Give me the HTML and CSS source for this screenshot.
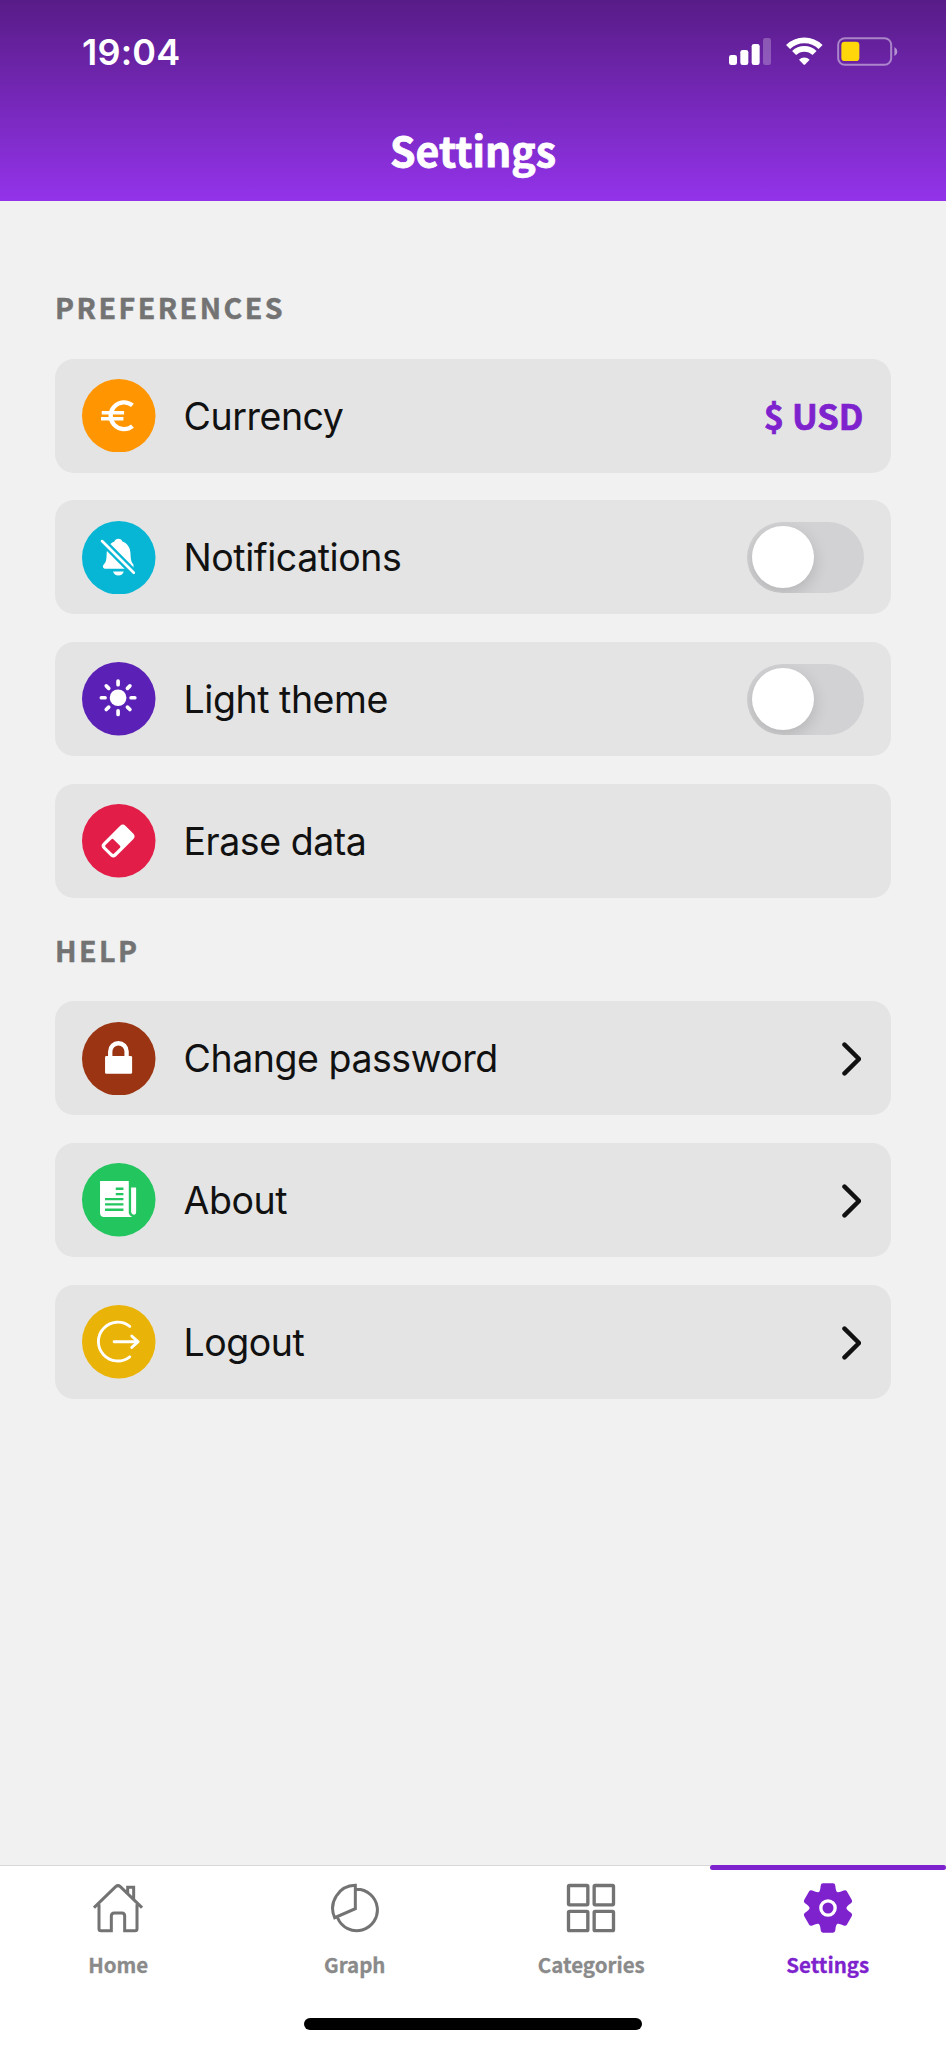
FILE: index.html
```html
<!DOCTYPE html>
<html lang="en">
<head>
<meta charset="utf-8">
<title>Settings</title>
<link rel="stylesheet" href="styles.css">
</head>
<body>
<div class="screen">
  <header class="header">
    <div class="status">
      <span class="time">19:04</span>
      <div class="status-icons">
        <svg class="signal" viewBox="768 111 126 87"><g fill="#fff"><rect x="768" y="165" width="24" height="30" rx="7"/><rect x="802" y="150" width="24" height="45" rx="7"/><rect x="836" y="132" width="24" height="63" rx="7"/><rect x="870" y="114" width="24" height="81" rx="7" opacity=".25"/></g></svg>
        <svg class="wifi" viewBox="938 111 111 87"><g fill="none" stroke="#fff"><path stroke-width="17" d="M944.2 141.2A69 69 0 0 1 1041.8 141.2"/><path stroke-width="17" d="M962.3 159.3A43.5 43.5 0 0 1 1023.700 159.3"/></g><path fill="#fff" d="M977 179A23 23 0 0 1 1009 179L996 193Q993 196 990 193Z"/></svg>
        <svg class="battery" viewBox="1092 111 182 87"><rect x="1095.500" y="114.500" width="159" height="80" rx="20" fill="none" stroke="#fff" stroke-opacity=".45" stroke-width="6"/><rect x="1105" y="125" width="54" height="58" rx="10" fill="#ffd60a"/><path d="M1264 141Q1273 146 1273 155T1264 169Z" fill="#fff" fill-opacity=".5"/></svg>
      </div>
    </div>
    <h1 class="title">Settings</h1>
  </header>

  <main class="content">
    <section class="group">
      <h2 class="group-title">PREFERENCES</h2>
      <div class="row">
        <svg class="badge" viewBox="0 0 220 220"><circle cx="110" cy="110" r="110" fill="#ff9500"/><g fill="none" stroke="#fff" stroke-width="13"><path d="M151 79A40 40 0 1 0 151 141"/><path d="M59 101H126M57 119H124" stroke-width="10"/></g></svg>
        <span class="label">Currency</span>
        <span class="value">$ USD</span>
      </div>
      <div class="row">
        <svg class="badge" viewBox="0 0 220 220"><circle cx="110" cy="110" r="110" fill="#06b6d4"/><path fill="#fff" d="M109 53C115 53 119 56 121 61C136 67 144 79 145 95C146 116 147 122 154 130V143H68C62 141 61 135 65 130C73 122 73 116 74 95C75 79 83 67 97 61C99 56 103 53 109 53ZM93 151H125C123 159 117 163 109 163S95 159 93 151Z"/><path d="M52 51L164 164" stroke="#06b6d4" stroke-width="22"/><path d="M60 60L155 155" stroke="#fff" stroke-width="8" stroke-linecap="round"/></svg>
        <span class="label">Notifications</span>
        <span class="switch"><span class="knob"></span></span>
      </div>
      <div class="row">
        <svg class="badge" viewBox="0 0 220 220"><circle cx="110" cy="110" r="110" fill="#5b21b6"/><g transform="translate(108 107)"><circle r="25" fill="#fff"/><path d="M0-50V-39M0 39V50M-50 0H-39M39 0H50M-35.400-35.400L-28-28M28 28L35.400 35.400M-35.400 35.400L-28 28M28-28L35.400-35.400" stroke="#fff" stroke-width="11" stroke-linecap="round"/></g></svg>
        <span class="label">Light theme</span>
        <span class="switch"><span class="knob"></span></span>
      </div>
      <div class="row">
        <svg class="badge" viewBox="0 0 220 220"><circle cx="110" cy="110" r="110" fill="#e11d48"/><g transform="translate(108 111) rotate(-45)"><rect x="-48" y="-28" width="96" height="56" rx="12" fill="#fff"/><rect x="-39" y="-18" width="33" height="36" rx="4" fill="#e11d48"/></g></svg>
        <span class="label">Erase data</span>
      </div>
    </section>

    <section class="group">
      <h2 class="group-title">HELP</h2>
      <div class="row">
        <svg class="badge" viewBox="0 0 220 220"><circle cx="110" cy="110" r="110" fill="#9a3412"/><rect x="69" y="102" width="81" height="53" rx="4" fill="#fff"/><path d="M84.500 104V88A24.500 24.500 0 0 1 133.500 88V104" fill="none" stroke="#fff" stroke-width="13"/></svg>
        <span class="label">Change password</span>
        <svg class="chevron" viewBox="0 0 19 34"><path d="M2.500 2.700L17 17L2.500 31.300"/></svg>
      </div>
      <div class="row">
        <svg class="badge" viewBox="0 0 220 220"><circle cx="110" cy="110" r="110" fill="#22c55e"/><path fill="#fff" d="M54 54H140V150Q141 158 150 162H66Q54 162 54 150ZM147 73H162V147Q162 155 155 155T147 147Z"/><path d="M101 77H124M101 93H124M69 108H124M69 124H124M69 140H124" stroke="#22c55e" stroke-width="7"/></svg>
        <span class="label">About</span>
        <svg class="chevron" viewBox="0 0 19 34"><path d="M2.500 2.700L17 17L2.500 31.300"/></svg>
      </div>
      <div class="row">
        <svg class="badge" viewBox="0 0 220 220"><circle cx="110" cy="110" r="110" fill="#eab308"/><g fill="none" stroke="#fff" stroke-width="8.500" stroke-linecap="round" stroke-linejoin="round"><path d="M143 64A58 58 0 1 0 143 155"/><path d="M96 110H168M149 93L168 110L149 127"/></g></svg>
        <span class="label">Logout</span>
        <svg class="chevron" viewBox="0 0 19 34"><path d="M2.500 2.700L17 17L2.500 31.300"/></svg>
      </div>
    </section>
  </main>

  <nav class="tabs">
    <div class="tab-list">
      <a class="tab">
        <svg class="tab-icon" viewBox="279 98 150 150"><path d="M282 172L347 109Q354 103 361 109L426 172M383 129V111H401V147M297 162V235Q297 241 303 241H334V197Q334 188 343 188H366Q374 188 374 197V241H405Q411 241 411 235V162"/></svg>
        <span class="tab-label">Home</span>
      </a>
      <a class="tab">
        <svg class="tab-icon" viewBox="990 98 150 150"><path d="M1066 175V105A69 69 0 0 0 1004 202ZM1070 117A62 62 0 1 1 1013 203"/></svg>
        <span class="tab-label">Graph</span>
      </a>
      <a class="tab">
        <svg class="tab-icon" viewBox="279 98 150 150"><g stroke-width="10"><rect x="286.500" y="105.500" width="58" height="58" rx="3"/><rect x="363.500" y="105.500" width="58" height="58" rx="3"/><rect x="286.500" y="183" width="58" height="58" rx="3"/><rect x="363.500" y="183" width="58" height="58" rx="3"/></g></svg>
        <span class="tab-label">Categories</span>
      </a>
      <a class="tab active">
        <svg class="tab-icon filled" viewBox="-75 -75 150 150"><defs><path id="tooth" d="M-27-48Q-23-52-22-67Q-21-74-15-74H15Q21-74 22-67Q23-52 27-48L0 0Z"/></defs><circle r="55"/><use href="#tooth"/><use href="#tooth" transform="rotate(60)"/><use href="#tooth" transform="rotate(120)"/><use href="#tooth" transform="rotate(180)"/><use href="#tooth" transform="rotate(240)"/><use href="#tooth" transform="rotate(300)"/><circle class="hub" r="21.500"/></svg>
        <span class="tab-label">Settings</span>
      </a>
    </div>
    <div class="home-indicator"></div>
  </nav>
</div>
</body>
</html>
```
FILE: styles.css
```css
* {
  box-sizing: border-box;
}

body {
  margin: 0;
  font-family: Inter, sans-serif;
  color: #111;
}

.screen {
  display: flex;
  flex-direction: column;
  width: 946px;
  height: 2048px;
  background: #f1f1f1;
}

.header {
  height: 201px;
  padding-top: 37px;
  background: linear-gradient(#581c87, #9333ea);
  color: #fff;
}

.status {
  display: flex;
  justify-content: space-between;
  height: 29px;
  padding: 0 48px 0 82px;
}

.time {
  font-size: 36px;
  font-weight: 600;
  line-height: 30px;
  letter-spacing: 0.200px;
}

.status-icons {
  display: flex;
}

.status-icons svg {
  height: 29px;
}

.signal {
  width: 42px;
  margin-right: 14.700px;
}

.wifi {
  width: 37px;
  margin-right: 14.300px;
}

.battery {
  width: 60.700px;
}

.title,
.group-title,
.value,
.tab-label {
  font-family: "Noto Sans CJK SC", sans-serif;
  font-weight: 700;
}

.title {
  margin: 53px 0 0;
  text-align: center;
  font-size: 41px;
  line-height: 60px;
  -webkit-text-stroke: 0.800px;
}

.content {
  flex: 1;
  padding: 81px 55px 0;
}

.group {
  display: flex;
  flex-direction: column;
  gap: 27.700px;
  margin-bottom: 27px;
}

.group-title {
  margin: 0 0 -1px;
  font-size: 28.500px;
  line-height: 50px;
  letter-spacing: 2.500px;
  color: #737373;
  -webkit-text-stroke: 0.500px;
}

.row {
  display: flex;
  align-items: center;
  height: 114px;
  padding: 0 27.500px 0 27px;
  border-radius: 19px;
  background: #e4e4e4;
}

.badge {
  width: 73.500px;
  height: 73.500px;
  margin-right: 28px;
}

.label {
  flex: 1;
  font-size: 37.500px;
  letter-spacing: -0.450px;
  padding-top: 1px;
}

.value {
  padding-bottom: 1px;
  font-size: 34.500px;
  color: #7e22ce;
  -webkit-text-stroke: 0.700px;
}

.switch {
  width: 117px;
  height: 71px;
  padding: 4.500px 5px;
  border-radius: 36px;
  background: #d2d2d4;
  overflow: hidden;
}

.knob {
  display: block;
  width: 62px;
  height: 62px;
  border-radius: 50%;
  background: #fff;
  box-shadow: 0 5px 16px rgba(0, 0, 0, 0.150);
}

.chevron {
  width: 19px;
  height: 34px;
  margin: 2px 3px 0 0;
  fill: none;
  stroke: #111;
  stroke-width: 4.500;
  stroke-linecap: round;
  stroke-linejoin: round;
}

.tabs {
  display: flex;
  flex-direction: column;
  align-items: center;
  justify-content: space-between;
  height: 183px;
  padding-bottom: 18px;
  border-top: 1px solid #d8d8d8;
  background: #fff;
}

.tab-list {
  display: grid;
  grid-template-columns: repeat(4, 1fr);
  width: 100%;
}

.tab {
  display: flex;
  flex-direction: column;
  align-items: center;
  margin-top: -1px;
  color: #8a8a8a;
}

.tab::before {
  content: "";
  width: 100%;
  height: 5px;
  margin-bottom: 12.700px;
  border-radius: 2.500px;
}

.tab.active {
  color: #7e22ce;
}

.tab.active::before {
  background: #7e22ce;
}

.tab-icon {
  width: 50px;
  height: 50px;
  fill: none;
  stroke: #737373;
  stroke-width: 9;
}

.tab-icon.filled {
  fill: #7e22ce;
  stroke: none;
}

.hub {
  stroke: #fff;
  stroke-width: 10;
}

.tab-label {
  margin-top: 16px;
  font-size: 20.500px;
  line-height: 30px;
  -webkit-text-stroke: 0.300px;
}

.home-indicator {
  width: 338px;
  height: 12px;
  border-radius: 6px;
  background: #000;
}
```
